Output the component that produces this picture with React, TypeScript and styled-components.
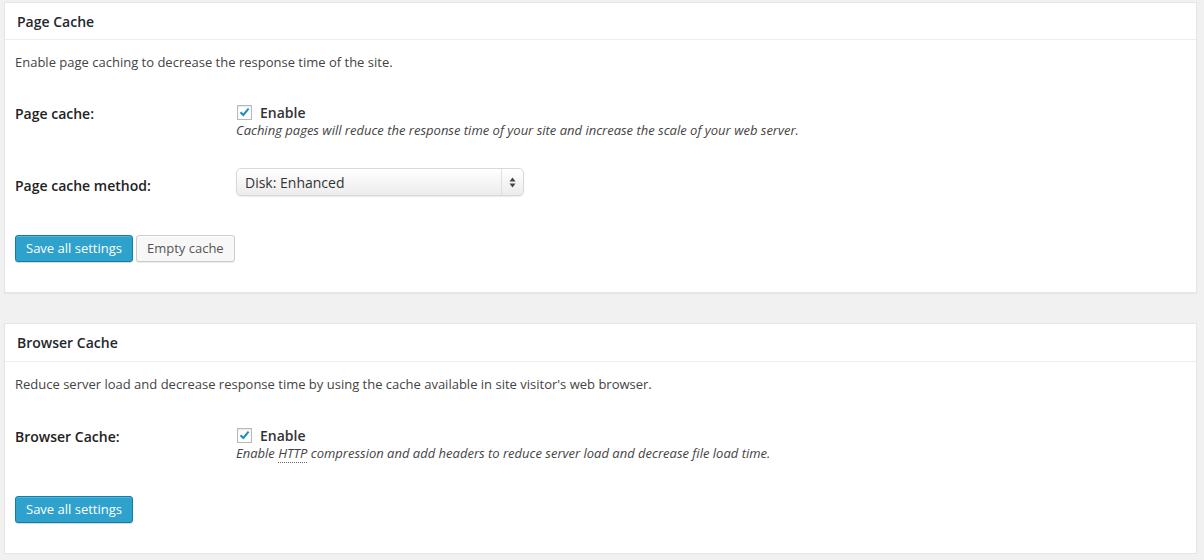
import styled, { createGlobalStyle } from "styled-components";

const GlobalStyle = createGlobalStyle`
  html, body {
    margin: 0;
    padding: 0;
    background: #f1f1f1;
    font-family: "Open Sans", "Liberation Sans", sans-serif;
    color: #444;
  }
`;

const Page = styled.div`
  padding: 2px 7px 0 4px;
  display: flex;
  flex-direction: column;
  gap: 30px;
`;

const Panel = styled.section`
  background: #fff;
  border: 1px solid #e5e5e5;
  box-shadow: 0 1px 1px rgba(0, 0, 0, 0.04);
`;

const PanelHeader = styled.h3<{ h: number }>`
  margin: 0;
  height: ${(p) => p.h}px;
  padding: 0 12px;
  display: flex;
  align-items: center;
  border-bottom: 1px solid #eee;
  font-size: 14px;
  font-weight: 600;
  color: #23282d;
`;

const PanelBody = styled.div`
  padding: 12px 10px 30px;
  display: flex;
  flex-direction: column;
`;

const Intro = styled.p`
  margin: 0;
  font-size: 13px;
  line-height: 20px;
  color: #444;
`;

const Row = styled.div<{ mt: number }>`
  display: grid;
  grid-template-columns: 221px 1fr;
  margin-top: ${(p) => p.mt}px;
`;

const Label = styled.div<{ pt: number }>`
  padding-top: ${(p) => p.pt}px;
  font-size: 14px;
  line-height: 20px;
  font-weight: 600;
  color: #222;
`;

const Control = styled.div`
  display: flex;
  flex-direction: column;
`;

const CheckLine = styled.label`
  display: flex;
  align-items: center;
  gap: 8px;
  height: 18px;
  font-size: 14px;
  font-weight: 600;
  color: #333;
`;

const Box = styled.span`
  width: 15px;
  height: 15px;
  border: 1px solid #b4b9be;
  background: #fff;
  box-shadow: inset 0 1px 2px rgba(0, 0, 0, 0.1);
  display: flex;
  align-items: center;
  justify-content: center;
  box-sizing: border-box;
  margin-left: 1px;
`;

const Help = styled.div`
  font-size: 13px;
  line-height: 18px;
  font-style: italic;
  color: #444;
  abbr {
    text-decoration: none;
    border-bottom: 1px dotted #666;
  }
`;

const Select = styled.div`
  width: 288px;
  height: 28px;
  box-sizing: border-box;
  border: 1px solid #d8d8d8;
  border-radius: 5px;
  background: linear-gradient(#ffffff, #ececec);
  box-shadow: 0 1px 1px rgba(0, 0, 0, 0.08);
  display: flex;
  align-items: center;
  font-size: 14px;
  color: #333;
`;

const SelectValue = styled.span`
  flex: 1;
  padding-left: 8px;
`;

const SelectArrows = styled.span`
  width: 21px;
  height: 100%;
  border-left: 1px solid #e0e0e0;
  display: flex;
  align-items: center;
  justify-content: center;
`;

const Buttons = styled.div<{ mt: number }>`
  display: flex;
  gap: 3px;
  margin-top: ${(p) => p.mt}px;
`;

const Button = styled.button<{ primary?: boolean }>`
  height: 27px;
  padding: 0 10px 1px;
  border-radius: 3px;
  font-family: inherit;
  font-size: 13px;
  cursor: pointer;
  border: 1px solid ${(p) => (p.primary ? "#0e7fa7" : "#ccc")};
  background: ${(p) => (p.primary ? "#2ea2cc" : "#f7f7f7")};
  color: ${(p) => (p.primary ? "#fff" : "#555")};
  box-shadow: ${(p) =>
    p.primary
      ? "inset 0 1px 0 rgba(120, 200, 230, 0.5), 0 1px 0 rgba(0, 0, 0, 0.15)"
      : "inset 0 1px 0 #fff, 0 1px 0 rgba(0, 0, 0, 0.08)"};
`;

const Check = () => (
  <Box>
    <svg width="11" height="10" viewBox="0 0 11 10">
      <path d="M1.5 5.2 L4.3 8 L9.6 1.6" fill="none" stroke="#1e8cbe" strokeWidth="2" />
    </svg>
  </Box>
);

export default function App() {
  return (
    <>
      <GlobalStyle />
      <Page>
        <Panel>
          <PanelHeader h={36}>Page Cache</PanelHeader>
          <PanelBody>
            <Intro>Enable page caching to decrease the response time of the site.</Intro>
            <Row mt={31}>
              <Label pt={1}>Page cache:</Label>
              <Control>
                <CheckLine>
                  <Check />
                  Enable
                </CheckLine>
                <Help>
                  Caching pages will reduce the response time of your site and increase the scale of your web server.
                </Help>
              </Control>
            </Row>
            <Row mt={29}>
              <Label pt={8}>Page cache method:</Label>
              <Select>
                <SelectValue>Disk: Enhanced</SelectValue>
                <SelectArrows>
                  <svg width="7" height="11" viewBox="0 0 7 11">
                    <path d="M3.5 0.5 L6.5 4.5 L0.5 4.5 Z M3.5 10.5 L6.5 6.5 L0.5 6.5 Z" fill="#444" />
                  </svg>
                </SelectArrows>
              </Select>
            </Row>
            <Buttons mt={39}>
              <Button primary>Save all settings</Button>
              <Button>Empty cache</Button>
            </Buttons>
          </PanelBody>
        </Panel>
        <Panel>
          <PanelHeader h={37}>Browser Cache</PanelHeader>
          <PanelBody>
            <Intro>
              Reduce server load and decrease response time by using the cache available in site visitor's web browser.
            </Intro>
            <Row mt={32}>
              <Label pt={1}>Browser Cache:</Label>
              <Control>
                <CheckLine>
                  <Check />
                  Enable
                </CheckLine>
                <Help>
                  Enable <abbr>HTTP</abbr> compression and add headers to reduce server load and decrease file load time.
                </Help>
              </Control>
            </Row>
            <Buttons mt={34}>
              <Button primary>Save all settings</Button>
            </Buttons>
          </PanelBody>
        </Panel>
      </Page>
    </>
  );
}
